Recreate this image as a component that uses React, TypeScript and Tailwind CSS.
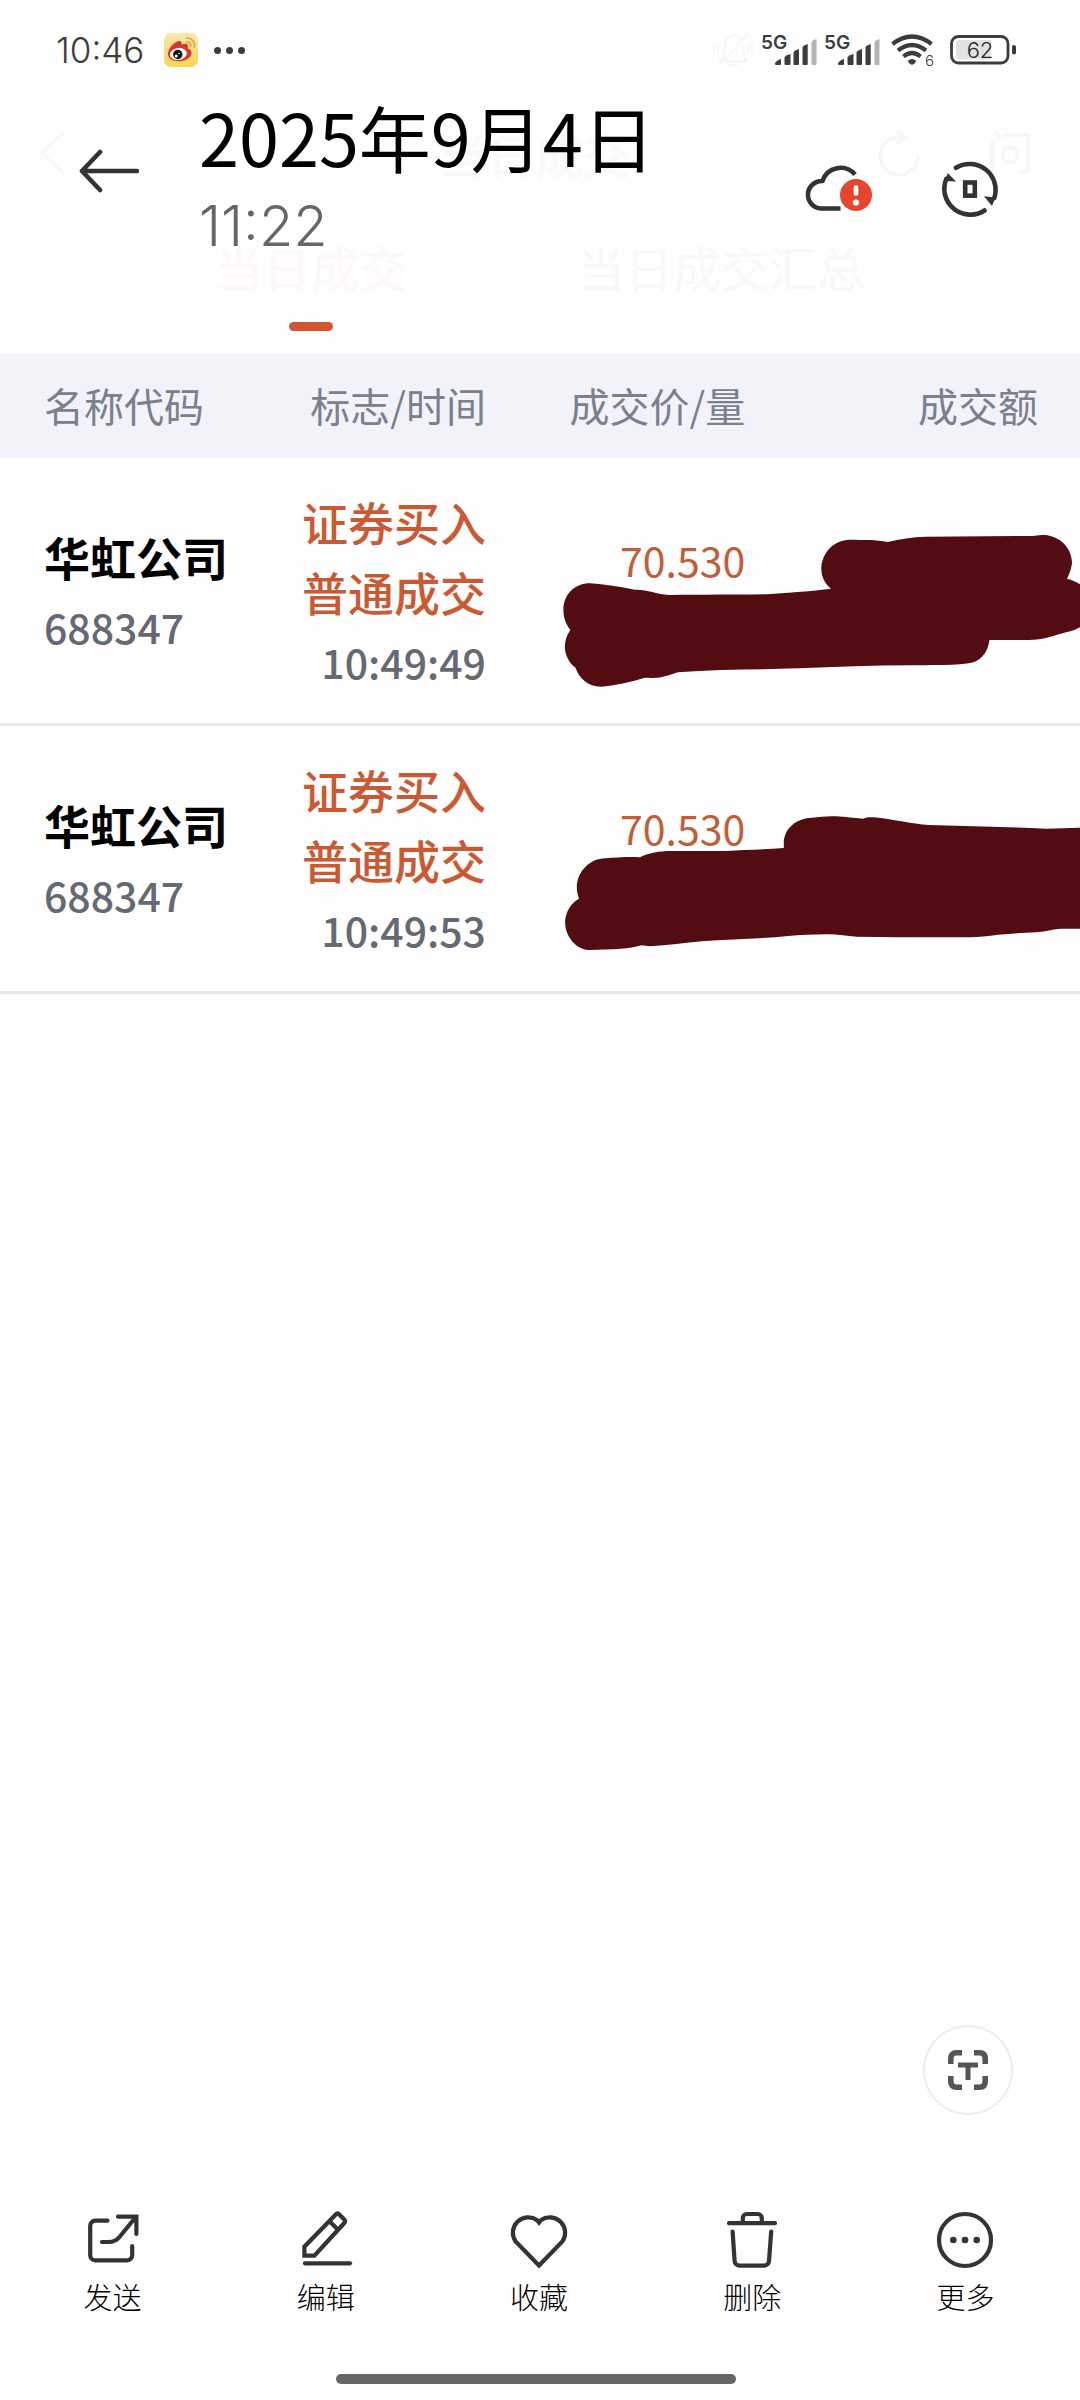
import type { ReactNode } from "react";

const trades = [
  {
    name: "华虹公司",
    code: "688347",
    side: "证券买入",
    kind: "普通成交",
    time: "10:49:49",
    price: "70.530",
    mask: "M3.4 152C3.5 136 15 125.3 30 125.3C45 126 60 129 74.7 131.7C86 131 96 136 109 137C145 136.500 175 137 207 136.300C225 134.500 248 134 271 130.700C264 125 261.300 118 261.300 110.300C262 95 273 82 290 81.700C303 82 316 81.500 327.800 84C340 81 352 79 365.700 78.700L473 78C478 77 481 77 484.500 77C500 78 512 90 512 105.300C511 112 509 117 506.900 120.700C512 122 517 124 520 126.300V169.300C514 173 507 174 500 176C490 179 480 182 469 182H429.400C428 195 420 204 408.700 205.300C393 207.500 376 207 358.800 207.300C318 207 278 209 238.300 210.300C198 212 158 211 117.700 214.300C110 217 102 220 93.600 220L85 219.700C71 224 57 227 42 228.700C28 229 19 220 15.500 209.700C9 205 5 197 4.800 188.700C5 182 7 177 10.300 172C6 166 3.400 160 3.400 152Z",
  },
  {
    name: "华虹公司",
    code: "688347",
    side: "证券买入",
    kind: "普通成交",
    time: "10:49:53",
    price: "70.530",
    mask: "M5.100 195.700C5.500 186 11 177 19 172.700C17.500 168 16.800 165 16.800 160.700C17.500 145 30 132.500 45.400 132.300C57 131.500 68 130.500 79.900 131.300C88 127 100 125 110.900 125H166C185 123.500 205 123.500 223.800 122V117C224 102 237 92 252 91.700C260 90.500 268 90 276 90.300C286 91 294 92 303 92.700C307 91 310 91 314 91.300C332 93 351 98 369 99C408 100 447 101 486 102.700C497 102.500 509 102 520 101.700V202.700H500C492 203.500 484 206 475.900 206.300C463 207 451 207.500 438 208.700C424 211 410 211.500 396.700 211.300C363 211.500 330 211 296.800 210.700C287 210 276 208 265.800 208.300C253 208.500 240 209 228 210C200 213 171 213 141.800 215.300C125 217 108 219 90 220.300L81.600 219.300C75 221 68 222.500 61 222.700C50 223.500 40 223.500 30 224C16 224 5 210 5.100 195.700Z",
  },
];

function WeiboIcon() {
  return (
    <svg width="34" height="34" viewBox="0 0 34 34" aria-hidden="true">
      <defs>
        <linearGradient id="weibo" x1="0" y1="0" x2="0" y2="1">
          <stop offset="0" stopColor="#f9e7b0" />
          <stop offset="1" stopColor="#f8d552" />
        </linearGradient>
      </defs>
      <rect width="34" height="34" rx="7" fill="url(#weibo)" />
      <path d="M4 20.500C4.500 15 10 9 15 8c2.500-.3 2.800 1.500 2.500 3.500 2.500-1 6-1.500 6.500 1 .2 1-.2 2-.4 3 3 1 4.200 2.600 3.800 5.500C26.500 25.500 20 28.500 14 28.300 8 28 3.500 25 4 20.500Z" fill="#d8382b" />
      <ellipse cx="14.300" cy="21" rx="8.600" ry="6" fill="#fff" transform="rotate(-8 14.300 21)" />
      <circle cx="13.800" cy="21.500" r="4.700" fill="#111" />
      <circle cx="12.200" cy="23" r="1.500" fill="#fff" />
      <circle cx="15" cy="20.500" r=".8" fill="#fff" />
      <g fill="none" stroke="#e5a64a" strokeWidth="1.800" strokeLinecap="round">
        <path d="M22.500 5.200c5-.5 8.800 3.600 7.800 8.800" />
        <path d="M22.800 9.200c2.800-.3 4.300 1.500 3.800 4" />
      </g>
    </svg>
  );
}

function Signal() {
  return (
    <svg width="56" height="42" viewBox="0 -5 56 42" role="img" aria-label="5G">
      <text x="0" y="15" fontSize="19" fontWeight="600" fill="#3c3c3c" className="font-[Inter,sans-serif]">
        5G
      </text>
      <g fill="#3c3c3c">
        <path d="M14 29.500q1-3 6-4.500v5q0 1-1 1h-4q-1 0-1-1.500Z" />
        <path d="M23.500 23q2-2.200 6-3v10q0 1-1 1h-4q-1 0-1-1Z" />
        <path d="M32.500 18q2-2.200 5.500-3v15q0 1-1 1h-3.500q-1 0-1-1Z" />
        <path d="M41.500 13q2-2.200 5.200-3v20q0 1-1 1h-3.200q-1 0-1-1Z" />
      </g>
      <path d="M50.500 8q1.800-2.200 5-3v25q0 1-1 1h-3q-1 0-1-1Z" fill="#b4b4b4" />
    </svg>
  );
}

function Wifi() {
  return (
    <svg width="44" height="42" viewBox="0 -4 44 42" role="img" aria-label="Wi-Fi 6">
      <g fill="none" stroke="#3c3c3c" strokeWidth="4.200">
        <path d="M1.500 11Q21 -4 40.500 11" />
        <path d="M7 17.500Q21 6.500 35 17.500" />
        <path d="M12.500 23.500Q21 16.500 29.500 23.500" />
      </g>
      <path d="M17 27.500q4-3 8 0l-.8 2.500-3.200 2-3.200-2Z" fill="#3c3c3c" />
      <text x="34" y="33" fontSize="15" fontWeight="300" fill="#3c3c3c" className="font-[Inter,sans-serif]">
        6
      </text>
    </svg>
  );
}

function Battery() {
  return (
    <svg width="66" height="30" viewBox="0 0 66 30" role="img" aria-label="62%">
      <rect x="1.500" y="1.500" width="56.500" height="26.500" rx="7" fill="none" stroke="#3c3c3c" strokeWidth="2.800" />
      <path d="M10 5H41V24.500H10q-4 0-4-4V9q0-4 4-4Z" fill="#e2e2e2" />
      <rect x="62" y="10" width="4" height="9.500" rx="2" fill="#3c3c3c" />
      <text x="30" y="23" textAnchor="middle" fontSize="22" fontWeight="300" fill="#222" className="font-[Inter,sans-serif]">
        62
      </text>
    </svg>
  );
}

function MutedBell() {
  return (
    <svg width="42" height="36" viewBox="0 0 42 36" fill="none" stroke="#f7f7f7" strokeWidth="2.500" strokeLinecap="round" aria-hidden="true">
      <path d="M7 29H35M9 28q3-3 3-9Q12 5 21 3q5 0 8 5M31 14q0 10 3 14M36 2 8 32M17 33h8M2 12v8M6 14v5M36 14v5M40 12v8" />
    </svg>
  );
}

// The broker page sits underneath and is almost washed out by the viewer bar
function BrokerHeader() {
  return (
    <div className="[grid-area:1/1] flex flex-col pt-[118px] font-medium">
      <div className="grid h-[70px] grid-cols-3 items-center pr-[50px] pl-10 text-[#f8f9f9]">
        <svg width="26" height="46" viewBox="0 0 26 46" fill="none" stroke="#f7f7f7" strokeWidth="3" aria-hidden="true">
          <path d="M24 2 2 23 24 44" />
        </svg>
        <p className="text-center text-5xl">当日成交</p>
        <div className="flex justify-end gap-[70px]">
          <svg width="42" height="46" viewBox="0 0 42 46" fill="none" stroke="#f6f6f6" strokeWidth="3.500" strokeLinecap="round" aria-hidden="true">
            <path d="M40 26A19 19 0 1 1 21 7H27M20 1 27 7 20 13" />
          </svg>
          <svg width="40" height="46" viewBox="0 0 40 46" fill="none" stroke="#f6f6f6" strokeWidth="3.500" strokeLinecap="round" aria-hidden="true">
            <path d="M2 12V43M6 2 10 7M15 5H38V42H31" />
            <rect x="13" y="18" width="14" height="14" rx="5" />
          </svg>
        </div>
      </div>
      <div className="flex gap-[170px] pt-10 pl-[215px] text-5xl leading-[76px] font-normal">
        <div className="flex flex-col items-center gap-[18px] text-[#fdf7f6]">
          <span>当日成交</span>
          <span className="h-[9px] w-11 rounded-full bg-[#d25530]" />
        </div>
        <span className="text-[#f7f8f8]">当日成交汇总</span>
      </div>
    </div>
  );
}

function ViewerHeader() {
  return (
    <div className="z-10 [grid-area:1/1]">
      <div className="flex h-[100px] items-center justify-between pr-16 pl-14 text-[#3c3c3c]">
        <div className="flex items-center">
          <span className="font-[Inter,sans-serif] text-[35px] font-light">10:46</span>
          <span className="ml-5">
            <WeiboIcon />
          </span>
          <span className="ml-4 flex gap-[5px]">
            <i className="size-[7px] rounded-full bg-[#3c3c3c]" />
            <i className="size-[7px] rounded-full bg-[#3c3c3c]" />
            <i className="size-[7px] rounded-full bg-[#3c3c3c]" />
          </span>
        </div>
        <div className="flex items-center gap-[7px]">
          <MutedBell />
          <Signal />
          <Signal />
          <span className="ml-1">
            <Wifi />
          </span>
          <span className="ml-2">
            <Battery />
          </span>
        </div>
      </div>

      <div className="flex items-start pr-[82px] pl-[79px]">
        <button type="button" aria-label="返回" className="mt-[49px]">
          <svg width="60" height="44" viewBox="0 0 60 44" fill="none" stroke="#333" strokeWidth="4.600" strokeLinecap="round" strokeLinejoin="round">
            <path d="M58 22H3M21 3 3 22 21 41" />
          </svg>
        </button>
        <div className="ml-[60px] flex-1">
          <h1 className="text-[72px] leading-[72px] text-black">2025年9月4日</h1>
          <p className="mt-4 font-[Inter,sans-serif] text-[56px] leading-[76px] font-light text-[#666]">11:22</p>
        </div>
        <div className="mt-[61px] flex gap-[68px]">
          <button type="button" aria-label="云备份异常">
            <svg width="70" height="54" viewBox="0 0 70 54" fill="none">
              <path d="M51 12.500A19 19 0 0 0 18.500 19A13.500 13.500 0 0 0 17 46.500H36.500" stroke="#333" strokeWidth="4.600" strokeLinejoin="round" />
              <circle cx="52" cy="33" r="18" fill="#fefefe" />
              <circle cx="52" cy="33" r="16" fill="#e6452f" />
              <path d="M52 25.500V31.500" stroke="#fff" strokeWidth="4.600" strokeLinecap="round" />
              <circle cx="52" cy="40.500" r="3.100" fill="#fff" />
            </svg>
          </button>
          <button type="button" aria-label="旋转">
            <svg width="56" height="56" viewBox="0 0 56 56" fill="none" stroke="#333" strokeWidth="4.600">
              <path d="M14 6.800A26 26 0 0 1 52.300 37" strokeLinecap="round" />
              <path d="M42.500 49.500A26 26 0 0 1 4.200 18" strokeLinecap="round" />
              <path d="M5.700 12 14 20.500 3 20Z" fill="#333" stroke="none" />
              <path d="M42 35.300 53.500 36.500 50 45Z" fill="#333" stroke="none" />
              <rect x="23.200" y="21.500" width="9.600" height="13.200" />
            </svg>
          </button>
        </div>
      </div>
    </div>
  );
}

function Action({ label, children }: { label: string; children: ReactNode }) {
  return (
    <button type="button" className="flex flex-col items-center gap-[3px]">
      <svg width="60" height="58" viewBox="-2 0 60 58" fill="none" stroke="#333" strokeWidth="4.200" strokeLinecap="round" aria-hidden="true">
        {children}
      </svg>
      <span className="text-[29px] leading-[48px] font-light text-black">{label}</span>
    </button>
  );
}

export default function App() {
  return (
    <div className="flex min-h-screen flex-col bg-[#fefefe] font-['Noto_Sans_CJK_SC',sans-serif]">
      <header className="grid min-h-[354px]">
        <BrokerHeader />
        <ViewerHeader />
      </header>

      <main className="flex flex-1 flex-col">
        <table className="w-full table-fixed border-separate border-spacing-0">
          <thead>
            <tr className="h-[104px] bg-[#f2f3f8] text-right text-[40px] text-[#7a808d]">
              <th className="w-[23%] pb-[3px] pl-11 text-left font-normal">名称代码</th>
              <th className="w-[22%] pb-[3px] font-normal">标志/时间</th>
              <th className="w-[24%] pb-[3px] font-normal">成交价/量</th>
              <th className="w-[31%] pr-[42px] pb-[3px] font-normal">成交额</th>
            </tr>
          </thead>
          <tbody>
            {trades.map((t) => (
              <tr key={t.time} className="h-[268px] text-right text-[41px] leading-[70px] [&>td]:border-b-3 [&>td]:border-[#e4e7eb]">
                <td className="pl-11 text-left">
                  <p className="text-[46px] font-bold text-black">{t.name}</p>
                  <p className="font-medium text-[#646973]">{t.code}</p>
                </td>
                <td className="font-medium">
                  <p className="text-[46px] text-[#c95a33]">{t.side}</p>
                  <p className="text-[46px] text-[#c95a33]">{t.kind}</p>
                  <p className="text-[#646973]">{t.time}</p>
                </td>
                <td className="pt-[66px] align-top text-[#bd5f39]">{t.price}</td>
                <td className="relative">
                  <svg className="absolute top-0 right-0" width="520" height="268" viewBox="0 0 520 268" aria-hidden="true">
                    <path d={t.mask} fill="#520c12" />
                  </svg>
                </td>
              </tr>
            ))}
          </tbody>
        </table>
      </main>

      <button type="button" aria-label="提取文字" className="mr-[67px] grid size-[90px] place-items-center self-end rounded-full border-2 border-[#ededed] bg-white">
        <svg width="40" height="40" viewBox="0 0 40 40" fill="none" stroke="#555" strokeWidth="5.600">
          <path d="M2.800 14V8.500Q2.800 2.800 8.500 2.800H14M26 2.800H31.500Q37.200 2.800 37.200 8.500V14M37.200 26V31.500Q37.200 37.200 31.500 37.200H26M14 37.200H8.500Q2.800 37.200 2.800 31.500V26" />
          <path d="M10 15H30M20 15V30" strokeWidth="5" />
        </svg>
      </button>

      <nav className="mt-24 grid grid-cols-5 pr-2 pl-[6px]">
        <Action label="发送">
          <path d="M22.500 9.700H10.200a5 5 0 0 0-5 5V44.300a5 5 0 0 0 5 5H42.200a5 5 0 0 0 5-5V35" />
          <path d="M33 5.700H51.400V23M50 7 34.500 26Q30.500 31 23.500 31H17" />
        </Action>
        <Action label="编辑">
          <path d="M6.400 44.700V35.700L38 3.200Q39.500 1.700 41 3.200L46.300 8.500Q47.800 10.300 46.300 12L16.400 44.700ZM31.500 10.300 39.500 18.300" strokeLinecap="butt" />
          <path d="M7 52.300H52" />
        </Action>
        <Action label="收藏">
          <path d="M28 11.500 26.200 9.200A15.400 15.400 0 0 0 4.600 30.500L28 54.500 51.400 30.500A15.400 15.400 0 0 0 29.800 9.200Z" />
        </Action>
        <Action label="删除">
          <path d="M5 12.200H51M18.800 12V7a4 4 0 0 1 4-4H33.800a4 4 0 0 1 4 4V12" />
          <path d="M8.600 20.500 10.600 50a5 5 0 0 0 5 4.700H40a5 5 0 0 0 5-4.700L47.200 20.500" />
        </Action>
        <Action label="更多">
          <circle cx="28" cy="29" r="26" />
          <g fill="#333" stroke="none">
            <circle cx="16.300" cy="29" r="3.300" />
            <circle cx="28" cy="29" r="3.300" />
            <circle cx="39.700" cy="29" r="3.300" />
          </g>
        </Action>
      </nav>

      <div className="flex justify-center pt-[54px] pr-2 pb-4">
        <span className="h-[10px] w-[400px] rounded-full bg-[#666]" />
      </div>
    </div>
  );
}
